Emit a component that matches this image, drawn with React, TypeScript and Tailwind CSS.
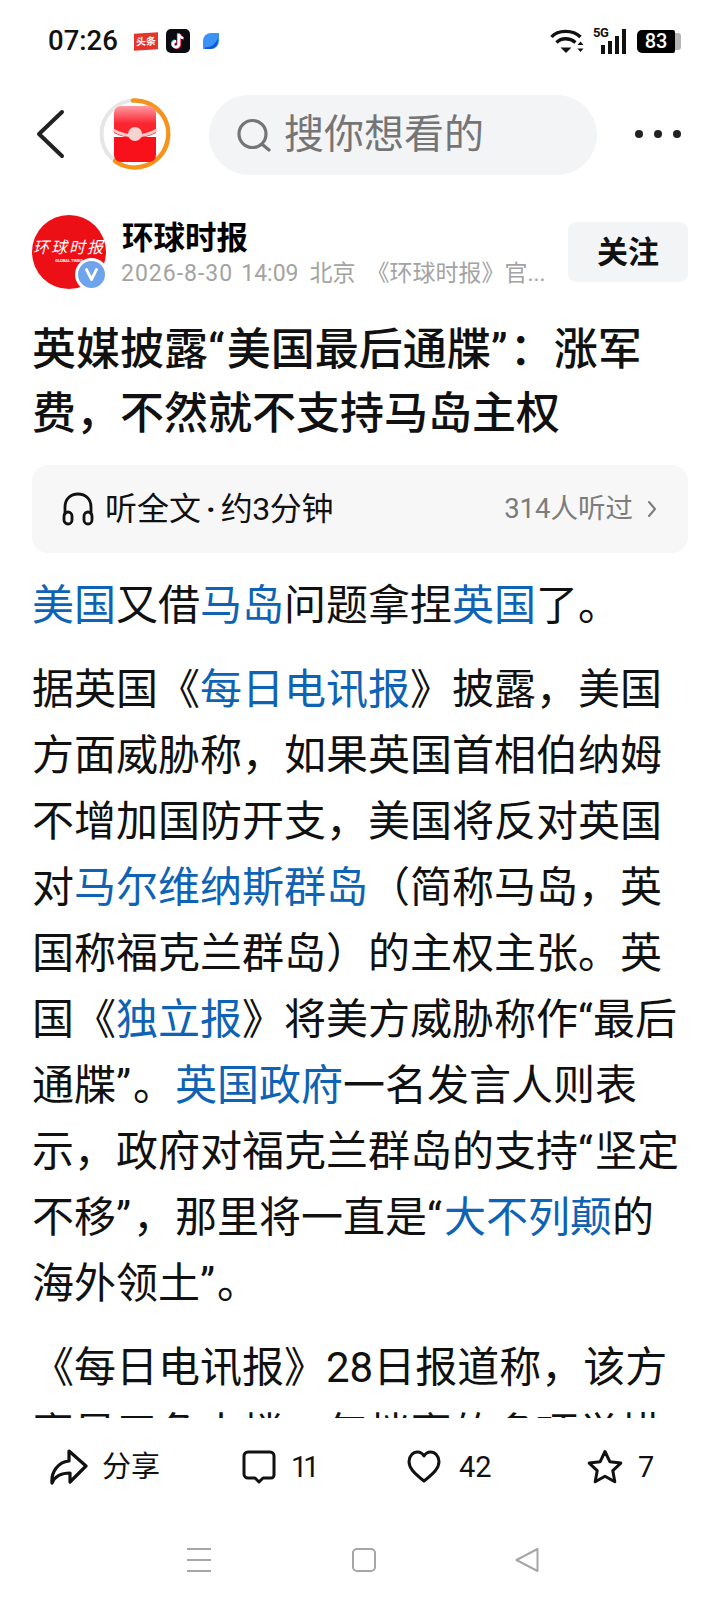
import React from "react";

const blue = "text-[#0f63b5]";

function L({ children }: { children: React.ReactNode }) {
  return <span className={blue}>{children}</span>;
}

// curly quotes sit a bit wider in the reference than in Roboto
function Q({ children }: { children: React.ReactNode }) {
  return <span className="tracking-[2px]">{children}</span>;
}

function Line({ children }: { children: React.ReactNode }) {
  return <div className="h-[66px] whitespace-nowrap leading-[66px]">{children}</div>;
}

function TikTok() {
  return (
    <svg width="24" height="24" viewBox="0 0 24 24">
      <rect width="24" height="24" rx="5" fill="#0b0b12" />
      <path d="M13 5v10.2a3 3 0 1 1-3-3" fill="none" stroke="#25f4ee" strokeWidth="2.6" transform="translate(-.8 -.5)" />
      <path d="M13 5c.3 2.4 1.8 3.8 4.2 4" fill="none" stroke="#25f4ee" strokeWidth="2.4" transform="translate(-.8 -.5)" />
      <path d="M13 5v10.2a3 3 0 1 1-3-3" fill="none" stroke="#fe2c55" strokeWidth="2.6" transform="translate(.8 .5)" />
      <path d="M13 5c.3 2.4 1.8 3.8 4.2 4" fill="none" stroke="#fe2c55" strokeWidth="2.4" transform="translate(.8 .5)" />
      <path d="M13 5v10.2a3 3 0 1 1-3-3" fill="none" stroke="#fff" strokeWidth="2.4" />
      <path d="M13 5c.3 2.4 1.8 3.8 4.2 4" fill="none" stroke="#fff" strokeWidth="2.2" />
    </svg>
  );
}

function Leaf() {
  return (
    <svg width="18" height="18" viewBox="0 0 18 18">
      <path d="M1 17V9a8 8 0 0 1 8-8h8v8a8 8 0 0 1-8 8z" fill="#3b93f5" />
      <path d="M3 15c5 1 10-2 13-9v3a8 8 0 0 1-8 8H3z" fill="#1257d8" />
    </svg>
  );
}

function Wifi() {
  return (
    <svg width="34" height="26" viewBox="0 0 34 26" fill="none" stroke="#111" strokeWidth="3.4">
      <path d="M1.500 9C8 1.500 23 1.500 30.500 9" />
      <path d="M6.500 14.500c5-5 13-5 19 0" />
      <path d="M10.500 19.500h11L16 25z" fill="#111" stroke="none" />
      <path d="M27.500 17l3-3.500 3 3.500zM27.500 20.500h6l-3 3.500z" fill="#111" stroke="none" />
    </svg>
  );
}

function Signal() {
  return (
    <div className="relative h-[25px] w-[32px]">
      <span className="absolute left-[-1px] top-[-3px] text-[13px] font-bold leading-[14px] tracking-[-0.5px] text-[#111]">5G</span>
      <div className="absolute bottom-0 right-0 flex items-end gap-[3px]">
        <div className="h-[9px] w-[4px] bg-[#111]" />
        <div className="h-[13px] w-[4px] bg-[#111]" />
        <div className="h-[18px] w-[4px] bg-[#111]" />
        <div className="h-[25px] w-[4px] bg-[#111]" />
      </div>
    </div>
  );
}

function RedPacket() {
  return (
    <svg width="74" height="74" viewBox="0 0 74 74">
      <defs>
        <linearGradient id="packetTop" x1="0" y1="0" x2="0" y2="1">
          <stop offset="0" stopColor="#ff9aa2" />
          <stop offset="0.55" stopColor="#fb2530" />
        </linearGradient>
      </defs>
      <circle cx="37" cy="37" r="33.500" fill="none" stroke="#e6e6e6" strokeWidth="4" />
      <path d="M35 3.500A33.500 33.500 0 1 1 17 64" fill="none" stroke="#f7931a" strokeWidth="4.500" strokeLinecap="round" />
      <path d="M16 40h42v18a7 7 0 0 1-7 7H23a7 7 0 0 1-7-7z" fill="#f8101a" />
      <path d="M16 16a7 7 0 0 1 7-7h28a7 7 0 0 1 7 7v20c-7 3.500-13 5-21 5s-14-1.500-21-5z" fill="url(#packetTop)" />
      <path d="M15 33c7 4 14 6 22 6s15-2 22-6" fill="none" stroke="#f9c9c6" strokeWidth="3" />
      <circle cx="37" cy="37" r="7" fill="#f6d3cf" />
    </svg>
  );
}

function Avatar() {
  return (
    <div className="relative h-[74px] w-[74px] shrink-0">
      <div className="flex h-[74px] w-[74px] flex-col items-center justify-center rounded-full bg-[#ec1016] text-white">
        <div className="mt-[-4px] whitespace-nowrap text-[16px] font-normal italic leading-[20px] tracking-[2px]">环球时报</div>
        <div className="text-[4px] font-bold leading-[5px]">GLOBAL TIMES</div>
      </div>
      <div className="absolute bottom-[-2px] right-[-2px] flex h-[33px] w-[33px] items-center justify-center rounded-full bg-white">
        <div className="flex h-[27px] w-[27px] items-center justify-center rounded-full bg-[#6ea4ec]">
          <svg width="15" height="15" viewBox="0 0 15 15" fill="none" stroke="#fff" strokeWidth="2.800" strokeLinecap="round" strokeLinejoin="round">
            <path d="M2.500 2.500l5 10 5-10" />
          </svg>
        </div>
      </div>
    </div>
  );
}

export default function App() {
  return (
    <div className="flex h-[1604px] w-[720px] flex-col overflow-hidden bg-white font-['Roboto','Noto_Sans_CJK_SC',sans-serif] text-[#111]">
      {/* status bar */}
      <div className="flex h-[82px] shrink-0 items-center pl-[48px] pr-[39px]">
        <span className="w-[86px] text-[27.500px] font-medium leading-none">07:26</span>
        <div className="flex h-[17px] w-[24px] -skew-y-3 items-center justify-center bg-[#e5352b] text-[10px] font-bold leading-none text-white">头条</div>
        <div className="ml-[8px]"><TikTok /></div>
        <div className="ml-[12px]"><Leaf /></div>
        <div className="ml-auto"><Wifi /></div>
        <div className="ml-[10px]"><Signal /></div>
        <div className="ml-[11px] flex items-center">
          <div className="flex h-[23px] w-[38px] items-center justify-center rounded-l-[5px] rounded-r-[2px] bg-black text-[20px] font-medium leading-none text-white">83</div>
          <div className="h-[17px] w-[6px] rounded-r-[3px] bg-[#b5b5b5]" />
        </div>
      </div>

      {/* nav */}
      <div className="flex h-[104px] shrink-0 items-center">
        <svg className="ml-[36px] shrink-0" width="30" height="50" viewBox="0 0 30 50" fill="none" stroke="#222" strokeWidth="4" strokeLinecap="round" strokeLinejoin="round">
          <path d="M26 3L3 25l23 22" />
        </svg>
        <div className="ml-[32px] shrink-0"><RedPacket /></div>
        <div className="ml-[37px] mt-[2px] flex h-[80px] w-[388px] items-center rounded-full bg-[#f3f4f6] pl-[28px]">
          <svg width="34" height="36" viewBox="0 0 34 36" fill="none" stroke="#757575" strokeWidth="3.200" strokeLinecap="round">
            <circle cx="15.500" cy="17" r="13.500" />
            <path d="M26 28l6 5" />
          </svg>
          <span className="ml-[13px] text-[40px] leading-none text-[#757575]">搜你想看的</span>
        </div>
        <div className="ml-[38px] flex items-center gap-[11px]">
          <div className="h-[8px] w-[8px] rounded-full bg-[#222]" />
          <div className="h-[8px] w-[8px] rounded-full bg-[#222]" />
          <div className="h-[8px] w-[8px] rounded-full bg-[#222]" />
        </div>
      </div>

      {/* article */}
      <div className="min-h-0 flex-1 overflow-hidden px-[32px] pt-[29px]">
        <div className="flex h-[74px] items-start">
          <Avatar />
          <div className="ml-[15px] w-[430px]">
            <div className="ml-[1px] pt-[1px] text-[31.500px] font-bold leading-[46px] text-black">环球时报</div>
            <div className="mt-[-3px] whitespace-nowrap text-[23px] leading-[30px] text-[#a3a3a3]">
              <span className="tracking-[1px]">2026-8-30</span>
              <span className="ml-[8px]">14:09</span>
              <span className="ml-[11px]">北京</span>
              <span className="ml-[11px]">《环球时报》官...</span>
            </div>
          </div>
          <div className="ml-auto mt-[7px] flex h-[60px] w-[120px] items-center justify-center rounded-[8px] bg-[#f3f4f6] text-[31px] font-bold leading-none">关注</div>
        </div>

        <h1 className="mt-[29px] text-[44px] font-medium leading-[64px] text-[#111]">
          <div className="whitespace-nowrap">英媒披露<Q>“</Q>美国最后通牒<Q>”</Q>：涨军</div>
          <div className="whitespace-nowrap">费，不然就不支持马岛主权</div>
        </h1>

        <div className="mt-[19px] flex h-[88px] items-center rounded-[16px] bg-[#f7f7f7] pl-[30px] pr-[31px]">
          <svg width="32" height="34" viewBox="0 0 32 34" fill="none" stroke="#111" strokeWidth="2.800" strokeLinecap="round">
            <path d="M3 22V15C3 7 8.500 2 16 2s13 5 13 13v7" />
            <rect x="2" y="20" width="8" height="12" rx="4" />
            <rect x="22" y="20" width="8" height="12" rx="4" />
          </svg>
          <span className="ml-[11px] text-[32px] leading-none">听全文</span>
          <span className="mx-[5px] text-[32px] font-bold leading-none">·</span>
          <span className="text-[32px] leading-none tracking-[-0.4px]">约3分钟</span>
          <span className="ml-auto text-[27.500px] leading-none text-[#7c7c7c]">314人听过</span>
          <svg className="ml-[14px]" width="10" height="18" viewBox="0 0 10 18" fill="none" stroke="#7c7c7c" strokeWidth="2" strokeLinecap="round" strokeLinejoin="round">
            <path d="M2 2l6 7-6 7" />
          </svg>
        </div>

        <div className="mt-[20px] text-[42px] text-[#111]">
          <Line><L>美国</L>又借<L>马岛</L>问题拿捏<L>英国</L>了。</Line>

          <div className="mt-[18px]">
            <Line>据英国《<L>每日电讯报</L>》披露，美国</Line>
            <Line>方面威胁称，如果英国首相伯纳姆</Line>
            <Line>不增加国防开支，美国将反对英国</Line>
            <Line>对<L>马尔维纳斯群岛</L>（简称马岛，英</Line>
            <Line>国称福克兰群岛）的主权主张。英</Line>
            <Line>国《<L>独立报</L>》将美方威胁称作“最后</Line>
            <Line>通牒<Q>”</Q>。<L>英国政府</L>一名发言人则表</Line>
            <Line>示，政府对福克兰群岛的支持<Q>“</Q>坚定</Line>
            <Line>不移<Q>”</Q>，那里将一直是<Q>“</Q><L>大不列颠</L>的</Line>
            <Line>海外领土<Q>”</Q>。</Line>
          </div>

          <div className="mt-[18px]">
            <Line>《每日电讯报》28日报道称，该方</Line>
            <Line>案是五角大楼一年档案的多项举措</Line>
          </div>
        </div>
      </div>

      {/* action bar */}
      <div className="flex h-[100px] shrink-0 items-start bg-white pl-[50px] pt-[30px] text-[29px] leading-none">
        <div className="flex h-[38px] w-[192px] items-center">
          <svg width="38" height="36" viewBox="0 0 38 36" fill="none" stroke="#111" strokeWidth="3.200" strokeLinejoin="round" strokeLinecap="round">
            <path d="M19 2l17 15-16 16v-9C12 24 5 27 2 34c-1-11 6-21 17-22z" />
          </svg>
          <span className="ml-[14px] text-[29px]">分享</span>
        </div>
        <div className="flex h-[38px] w-[165px] items-center">
          <svg width="34" height="34" viewBox="0 0 34 34" fill="none" stroke="#111" strokeWidth="3" strokeLinejoin="round">
            <path d="M6 2h22a4 4 0 0 1 4 4v19a3 3 0 0 1-3 3h-8l-4 4-4-4H6a4 4 0 0 1-4-4V6a4 4 0 0 1 4-4z" />
          </svg>
          <span className="ml-[15px] tracking-[-4px]">11</span>
        </div>
        <div className="flex h-[38px] w-[180px] items-center">
          <svg width="34" height="34" viewBox="0 0 34 34" fill="none" stroke="#111" strokeWidth="3" strokeLinejoin="round">
            <path d="M17 31C7 23 2 18 2 11.500 2 6 6 2 10.500 2 13 2 15.500 3.500 17 6c1.500-2.500 4-4 6.500-4C28 2 32 6 32 11.500 32 18 27 23 17 31z" />
          </svg>
          <span className="ml-[18px]">42</span>
        </div>
        <div className="flex h-[38px] items-center">
          <svg width="36" height="36" viewBox="0 0 36 36" fill="none" stroke="#111" strokeWidth="3" strokeLinejoin="round">
            <path d="M18 2.500l4.800 10.200 11 1.400-8 7.600 2 11-9.800-5.400-9.800 5.400 2-11-8-7.600 11-1.400z" />
          </svg>
          <span className="ml-[15px]">7</span>
        </div>
      </div>

      {/* system nav */}
      <div className="flex h-[86px] shrink-0 items-start bg-white pl-[187px] pt-[30px]">
        <div className="flex h-[24px] w-[24px] flex-col justify-between">
          <div className="h-[2px] bg-[#a6a6a6]" />
          <div className="h-[2px] bg-[#a6a6a6]" />
          <div className="h-[2px] bg-[#a6a6a6]" />
        </div>
        <div className="ml-[141px] h-[24px] w-[24px] rounded-[5px] border-2 border-[#a6a6a6]" />
        <svg className="ml-[139px]" width="24" height="24" viewBox="0 0 24 24" fill="none" stroke="#a6a6a6" strokeWidth="2" strokeLinejoin="round">
          <path d="M1.500 12L22.500 1v22z" />
        </svg>
      </div>
    </div>
  );
}
